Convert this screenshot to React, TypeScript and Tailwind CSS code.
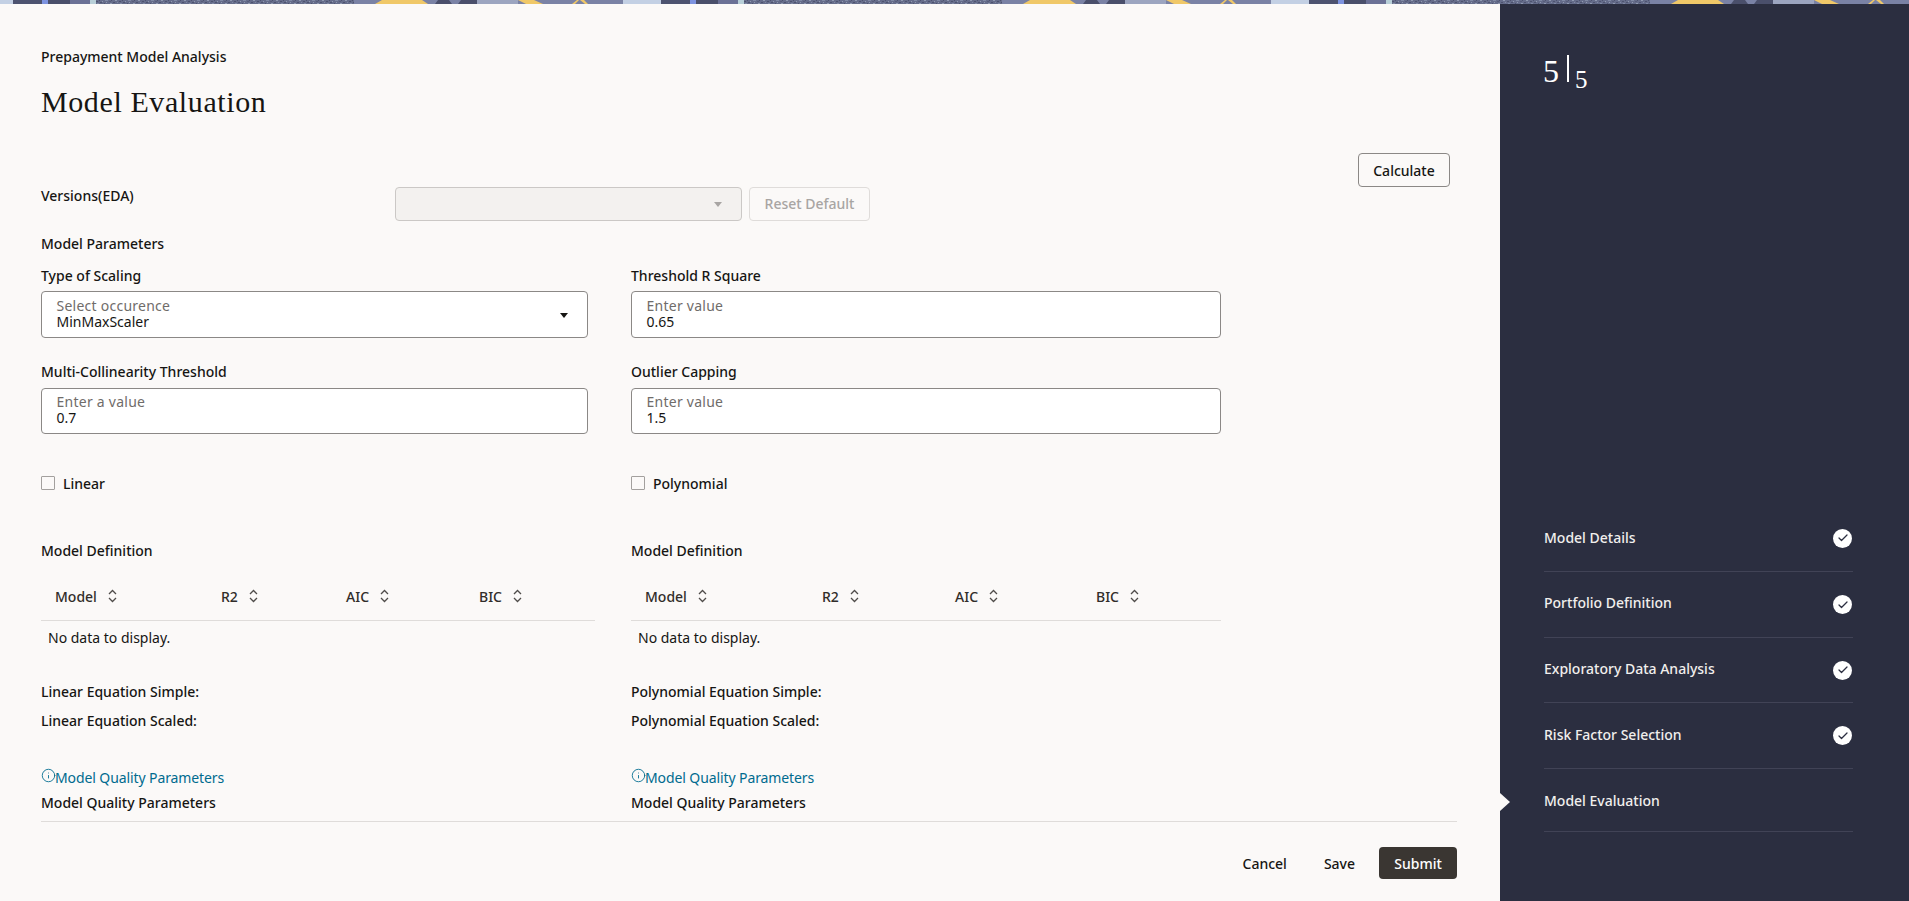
import { Check, Info } from 'lucide-react';

const sans = 'font-["Noto_Sans",sans-serif]';

function TopBand() {
    // the strip repeats every 648px
    return (
        <svg className="block w-full h-1 shrink-0" height="4" aria-hidden="true">
            <defs>
                <pattern id="grain" width="23" height="4" patternUnits="userSpaceOnUse">
                    <rect width="23" height="4" fill="#656c8a" />
                    <rect x="0" y="0" width="2" height="1" fill="#8f99b0" />
                    <rect x="7" y="0" width="1" height="1" fill="#4d536f" />
                    <rect x="13" y="0" width="3" height="1" fill="#7f89a4" />
                    <rect x="19" y="0" width="1" height="1" fill="#4d536f" />
                    <rect x="4" y="1" width="2" height="1" fill="#4d536f" />
                    <rect x="10" y="1" width="1" height="1" fill="#8f99b0" />
                    <rect x="17" y="1" width="2" height="1" fill="#575d7a" />
                    <rect x="2" y="2" width="1" height="1" fill="#7f89a4" />
                    <rect x="8" y="2" width="2" height="1" fill="#4d536f" />
                    <rect x="14" y="2" width="1" height="1" fill="#8f99b0" />
                    <rect x="21" y="2" width="2" height="1" fill="#4d536f" />
                    <rect x="5" y="3" width="2" height="1" fill="#7f89a4" />
                    <rect x="12" y="3" width="1" height="1" fill="#4d536f" />
                    <rect x="18" y="3" width="2" height="1" fill="#8f99b0" />
                </pattern>
                <pattern id="band" width="648" height="4" patternUnits="userSpaceOnUse">
                    <rect width="648" height="4" fill="#7a82a5" />
                    <rect x="0" width="13" height="4" fill="#c3d0e4" />
                    <rect x="13" width="29" height="4" fill="#4d5370" />
                    <rect x="42" width="6" height="4" fill="#7d93e0" />
                    <rect x="48" width="22" height="4" fill="#4a4f6b" />
                    <rect x="70" width="20" height="4" fill="#6b7196" />
                    <rect x="90" width="6" height="4" fill="#b8cfd8" />
                    <rect x="96" width="258" height="4" fill="url(#grain)" />
                    <polygon points="375,4 382,0 422,0 428,4" fill="#f0c868" />
                    <polygon points="435,4 438,0 449,0 452,4" fill="#4a4f6b" />
                    <polygon points="458,4 461,0 477,0 477,4" fill="#4a4f6b" />
                    <rect x="477" width="41" height="4" fill="#9ca5c0" />
                    <polygon points="518,0 534,0 543,4 526,4" fill="#f0c868" />
                    <polygon points="572,4 577,0 579,0 575,4" fill="#f0c868" />
                    <polygon points="580,0 584,0 588,4 585,4" fill="#f0c868" />
                    <rect x="623" width="25" height="4" fill="#c3d0e4" />
                </pattern>
            </defs>
            <rect width="100%" height="4" fill="url(#band)" />
        </svg>
    );
}

function SortIcon() {
    return (
        <svg width="9" height="14" viewBox="0 0 9 14" fill="none" stroke="#4f4c4a" strokeWidth="1.3" aria-hidden="true">
            <path d="M1 5 4.5 1.5 8 5" />
            <path d="M1 9 4.5 12.5 8 9" />
        </svg>
    );
}

function Field({ label, hint, value, width, marginTop, gap, height, caret }: {
    label: string;
    hint: string;
    value: string;
    width: string;
    marginTop: string;
    gap: string;
    height: string;
    caret?: boolean;
}) {
    return (
        <div className={marginTop}>
            <div className="h-5 text-[14px] leading-5 font-medium text-[#161513]">{label}</div>
            <div className={`relative ${gap} ${width} ${height} bg-white border border-[#8b8886] rounded-[4px] pl-[14.5px] pb-[2px] flex flex-col justify-center`}>
                <div className="text-[14px] leading-4 tracking-[0.25px] text-[#6f6c6a]">{hint}</div>
                <div className="text-[14px] leading-4 text-[#161513]">{value}</div>
                {caret && (
                    <div className="absolute right-[19px] top-[21px] w-0 h-0 border-x-[4.5px] border-x-transparent border-t-[5px] border-t-[#161513]" />
                )}
            </div>
        </div>
    );
}

function ModelColumn({ fields, checkLabel, columns, grid, tableWidth, eqSimple, eqScaled }: {
    fields: { label: string; hint: string; value: string; caret?: boolean }[];
    checkLabel: string;
    columns: string[];
    grid: string;
    tableWidth: string;
    eqSimple: string;
    eqScaled: string;
}) {
    const inputWidth = tableWidth === 'w-[554px]' ? 'w-[547px]' : 'w-[590px]';
    return (
        <div className={tableWidth}>
            <Field {...fields[0]} width={inputWidth} marginTop="mt-[12px]" gap="mt-[5px]" height="h-[47px]" />
            <Field {...fields[1]} width={inputWidth} marginTop="mt-[24px]" gap="mt-[6px]" height="h-[46px]" />

            <div className="mt-[39px] h-5 flex items-center gap-[8px]">
                <div className="w-[14px] h-[14px] border border-[#a3a09e] rounded-[1px] bg-[#fbf9f8]" />
                <span className="text-[14px] font-medium text-[#161513]">{checkLabel}</span>
            </div>

            <div className="mt-[48px] h-5 text-[14px] leading-5 font-medium text-[#161513]">Model Definition</div>

            <div className={`mt-[13px] h-[47px] pb-[2px] grid ${grid} items-center border-b border-[#dfdcda]`}>
                {columns.map((col) => (
                    <div key={col} className="pl-[14px] flex items-center gap-[11px] text-[14px] font-medium text-[#312d2a]">
                        {col}
                        <SortIcon />
                    </div>
                ))}
            </div>
            <div className="mt-[7px] h-5 pl-[7px] text-[14px] leading-5 text-[#161513]">No data to display.</div>

            <div className="mt-[34px] h-5 text-[14px] leading-5 font-medium text-[#161513]">{eqSimple}</div>
            <div className="mt-[9px] h-5 text-[14px] leading-5 font-medium text-[#161513]">{eqScaled}</div>

            <div className="mt-[36px] h-5 flex items-center text-[14px] tracking-[-0.1px] text-[#006b8f]">
                <Info size={15} strokeWidth={1.4} className="-mr-px -mt-[3px]" />
                Model Quality Parameters
            </div>
            <div className="mt-[6px] h-5 text-[14px] leading-5 font-medium text-[#161513]">Model Quality Parameters</div>
        </div>
    );
}

const steps = [
    { name: 'Model Details', done: true, row: 'h-[67px]', shift: '-translate-y-px' },
    { name: 'Portfolio Definition', done: true, row: 'h-[66px]', shift: '-translate-y-[2px]' },
    { name: 'Exploratory Data Analysis', done: true, row: 'h-[65px]', shift: '-translate-y-[2px]' },
    { name: 'Risk Factor Selection', done: true, row: 'h-[66px]', shift: '-translate-y-px' },
    { name: 'Model Evaluation', done: false, row: 'h-[63px]', shift: '' },
];

export default function App() {
    return (
        <div className={`h-screen flex flex-col overflow-hidden ${sans}`}>
            <TopBand />
            <div className="flex flex-1 min-h-0">
                <main className="w-[1500px] shrink-0 bg-[#fbf9f8] pl-[41px] pr-[43px] pt-[43px]">
                    <div className="h-5 text-[14px] leading-5 font-medium text-[#161513]">Prepayment Model Analysis</div>
                    <h1 className='mt-[17px] h-9 text-[30px] leading-9 tracking-[0.6px] text-[#161513] font-["Liberation_Serif",serif]'>Model Evaluation</h1>

                    <div className="mt-[33px] flex justify-end pr-[7px]">
                        <button className="w-[92px] h-[34px] border border-[#8b8886] rounded-[4px] text-[14px] font-medium text-[#161513]">Calculate</button>
                    </div>

                    <div className="flex items-start h-[34px]">
                        <div className="w-[354px] h-5 -mt-px text-[14px] leading-5 font-medium text-[#161513]">Versions(EDA)</div>
                        <div className="relative w-[347px] h-[34px] border border-[#cbc8c6] rounded-[4px] bg-[#f3f1ef] bg-[radial-gradient(#dedbd9_0.6px,transparent_0.6px)] bg-[length:4px_4px]">
                            <div className="absolute right-[19px] top-[14px] w-0 h-0 border-x-[4px] border-x-transparent border-t-[5px] border-t-[#a8a5a3]" />
                        </div>
                        <button className="ml-[7px] w-[121px] h-[34px] pb-[2px] border border-[#dfdcda] rounded-[4px] text-[14px] font-medium text-[#a8a5a3]">Reset Default</button>
                    </div>

                    <div className="mt-[13px] h-5 text-[14px] leading-5 font-medium text-[#161513]">Model Parameters</div>

                    <div className="flex gap-[36px]">
                        <ModelColumn
                            tableWidth="w-[554px]"
                            fields={[
                                { label: 'Type of Scaling', hint: 'Select occurence', value: 'MinMaxScaler', caret: true },
                                { label: 'Multi-Collinearity Threshold', hint: 'Enter a value', value: '0.7' },
                            ]}
                            checkLabel="Linear"
                            columns={['Model', 'R2', 'AIC', 'BIC']}
                            grid="grid-cols-[166px_125px_133px_130px]"
                            eqSimple="Linear Equation Simple:"
                            eqScaled="Linear Equation Scaled:"
                        />
                        <ModelColumn
                            tableWidth="w-[590px]"
                            fields={[
                                { label: 'Threshold R Square', hint: 'Enter value', value: '0.65' },
                                { label: 'Outlier Capping', hint: 'Enter value', value: '1.5' },
                            ]}
                            checkLabel="Polynomial"
                            columns={['Model', 'R2', 'AIC', 'BIC']}
                            grid="grid-cols-[177px_133px_141px_139px]"
                            eqSimple="Polynomial Equation Simple:"
                            eqScaled="Polynomial Equation Scaled:"
                        />
                    </div>

                    <div className="mt-[8px] border-t border-[#dfdcda]" />

                    <div className="mt-[25px] flex justify-end items-center h-8 text-[14px] font-medium text-[#161513]">
                        <button>Cancel</button>
                        <button className="ml-[37px]">Save</button>
                        <button className="ml-[24px] w-[78px] h-8 rounded-[4px] bg-[#3a3632] text-white">Submit</button>
                    </div>
                </main>

                <aside className="flex-1 bg-[#2b2e40] pl-[44px] pr-[56px] pb-[69px] flex flex-col justify-between">
                    <div className='mt-[51px] flex items-start text-white font-["Liberation_Serif",serif]'>
                        <span className="-ml-px -mt-[2px] text-[32px] leading-[36px]">5</span>
                        <span className="ml-[8px] w-[1.5px] h-[27px] bg-white" />
                        <span className="ml-[6.5px] mt-[11px] text-[25px] leading-[28px]">5</span>
                    </div>
                    <ol>
                        {steps.map((step) => (
                            <li key={step.name} className={`relative ${step.row} flex items-center justify-between border-b border-[#414356] text-[14px] font-medium text-[#f1efed]`}>
                                <span className={step.shift}>{step.name}</span>
                                {step.done && (
                                    <span className="mr-px w-[19px] h-[19px] rounded-full bg-white flex items-center justify-center">
                                        <Check size={12} strokeWidth={2.5} className="text-[#2b2e40]" />
                                    </span>
                                )}
                                {!step.done && (
                                    <span className="absolute -left-[44px] top-[24px] w-0 h-0 border-y-[9px] border-y-transparent border-l-[10px] border-l-[#fbf9f8]" />
                                )}
                            </li>
                        ))}
                    </ol>
                </aside>
            </div>
        </div>
    );
}
